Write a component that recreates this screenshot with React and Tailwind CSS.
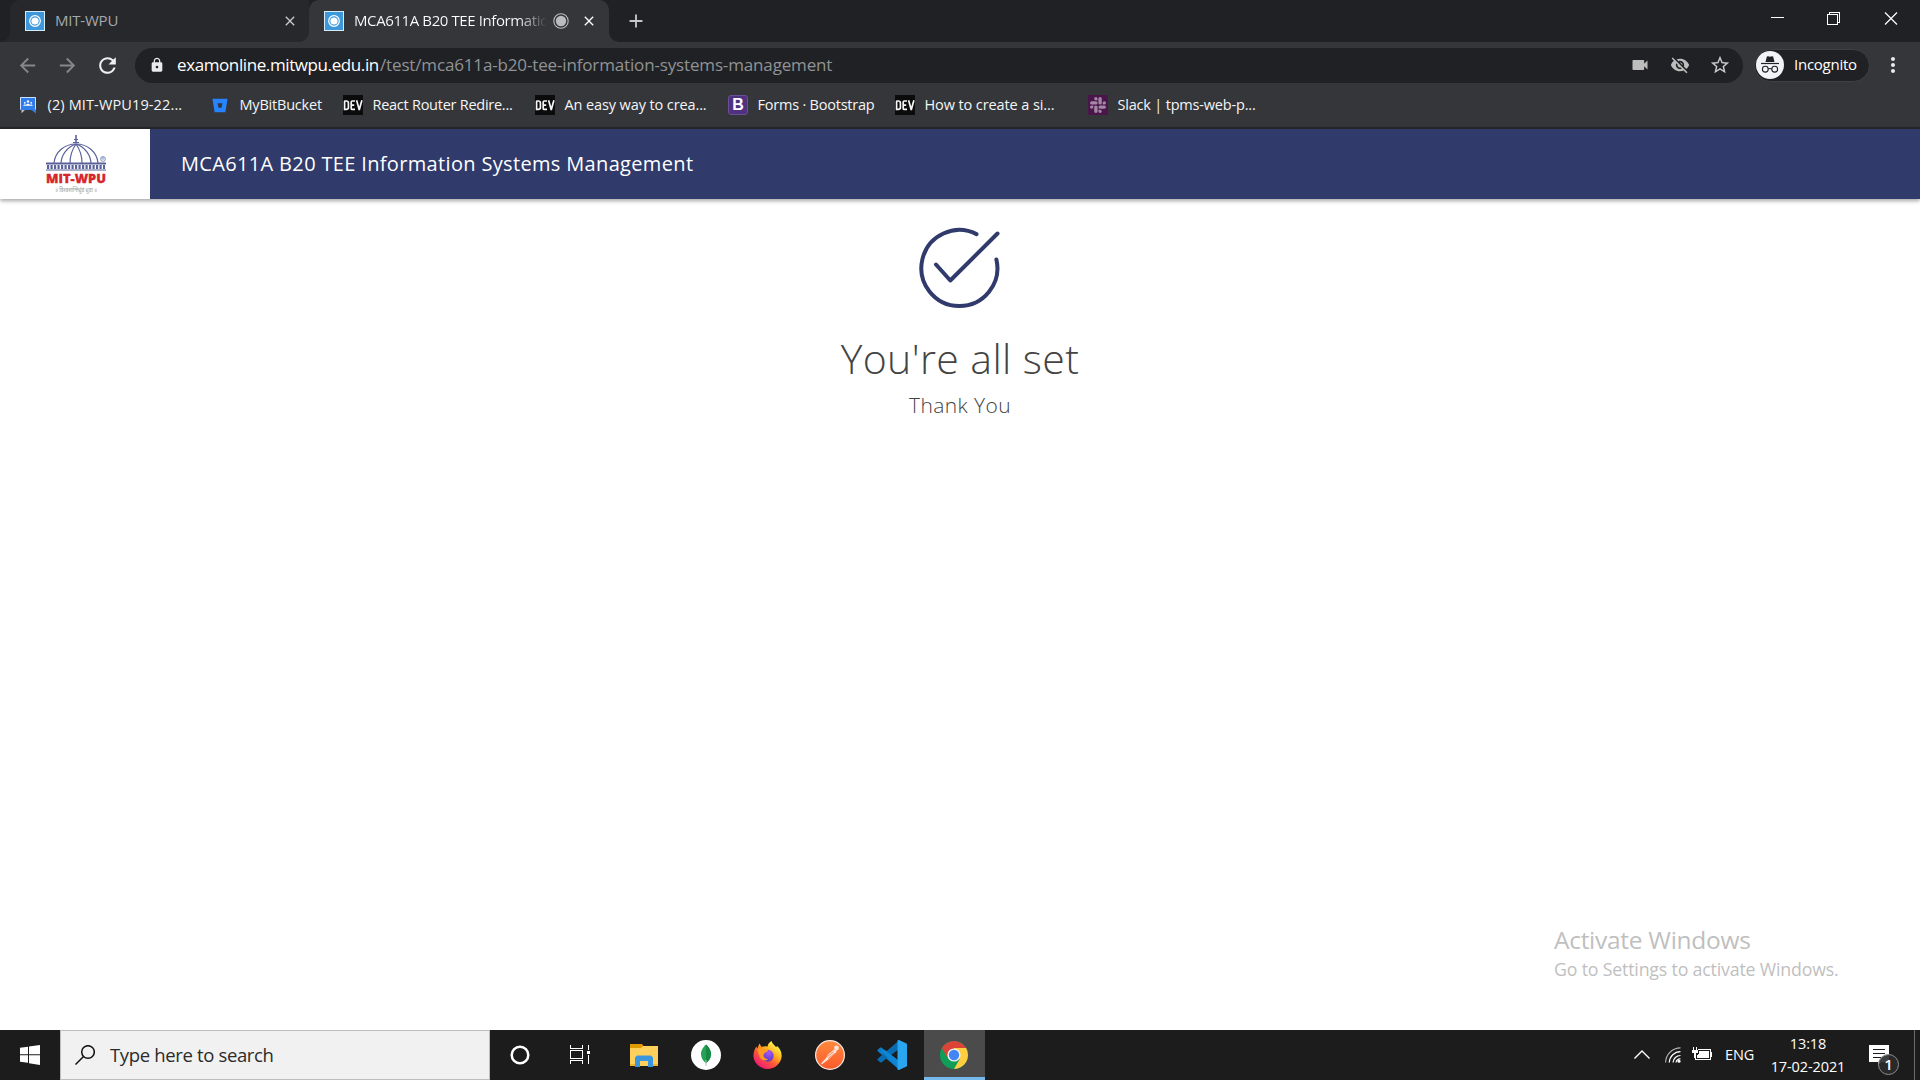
import React from "react";
import {
  MdVideocam,
  MdVisibilityOff,
  MdStarBorder,
  MdLock,
  MdRefresh,
  MdArrowBack,
  MdArrowForward,
  MdClose,
  MdAdd,
  MdMoreVert,
} from "react-icons/md";
import { SiSlack, SiBitbucket } from "react-icons/si";

const UI_FONT = "font-['Open_Sans',sans-serif]";

function Favicon() {
  return (
    <svg className="h-5 w-5 shrink-0" viewBox="0 0 20 20">
      <rect x="0.5" y="0.5" width="19" height="19" fill="#3c97db" stroke="#d7ebf9" />
      <circle cx="10" cy="10" r="5.3" fill="none" stroke="#fff" strokeWidth="1.2" />
      <circle cx="10" cy="10" r="3.6" fill="#fff" />
    </svg>
  );
}

function DevIcon() {
  return (
    <span className="flex h-5 w-5 items-center justify-center bg-[#0b0b0b]">
      <svg className="h-5 w-5" viewBox="0 0 20 20" fill="none" stroke="#f5f5f5" strokeWidth="1.7">
        <path d="M1.6 6v8.4h1.6c1.5 0 2.2-.8 2.2-2V8c0-1.3-.7-2-2.2-2H1.2M12 6H9.2c-.7 0-1 .4-1 1v6.400c0 .7.3 1 1 1H12M8.200 10.200h3M13.600 5.300l2.500 9h.3l2.500-9" />
      </svg>
    </span>
  );
}

function ChatIcon() {
  return (
    <svg className="h-5 w-5" viewBox="0 0 20 20">
      <path d="M3.500 12v6.300L8 14z" fill="#c9c3b8" />
      <path d="M2 2h16v16.500L13.500 15H2z" fill="#2f7ceb" />
      <path d="M2.500 14.500v-12h15v12" fill="none" stroke="#cfe0fb" strokeWidth="1" />
      <g fill="#fff">
        <circle cx="10" cy="6.500" r="1.200" />
        <circle cx="6.800" cy="7.800" r="0.900" />
        <circle cx="13.200" cy="7.800" r="0.900" />
        <path d="M5.200 10.800c.5-1.300 2-1.500 2.700-.9 1-1.600 3.200-1.600 4.200 0 .8-.6 2.200-.4 2.700.9z" />
      </g>
    </svg>
  );
}

function BootstrapIcon() {
  return (
    <span className="flex h-5 w-5 items-center justify-center rounded-[3px] border border-[#6a4f94] bg-[#4f3180] font-['Liberation_Sans',sans-serif] text-[16px] leading-none font-bold text-white">
      B
    </span>
  );
}

function SlackIcon() {
  return (
    <span className="flex h-5 w-5 items-center justify-center bg-[#4a154b]">
      <SiSlack className="h-4 w-4 text-[#a487a5]" />
    </span>
  );
}

const bookmarks = [
  { label: "(2) MIT-WPU19-22...", icon: <ChatIcon />, width: "w-[192px]", track: "tracking-[0.13px]" },
  { label: "MyBitBucket", icon: <SiBitbucket className="h-[15px] w-5 text-[#2684ff]" />, width: "w-[133px]", track: "tracking-[-0.2px]" },
  { label: "React Router Redire...", icon: <DevIcon />, width: "w-[192px]", track: "tracking-[-0.26px]" },
  { label: "An easy way to crea...", icon: <DevIcon />, width: "w-[193px]", track: "tracking-[-0.11px]" },
  { label: "Forms · Bootstrap", icon: <BootstrapIcon />, width: "w-[167px]", track: "tracking-[-0.22px]" },
  { label: "How to create a si...", icon: <DevIcon />, width: "w-[193px]", track: "tracking-[-0.1px]" },
  { label: "Slack | tpms-web-p...", icon: <SlackIcon />, width: "w-[192px]", track: "tracking-[-0.19px]" },
];

function TabStrip() {
  return (
    <div className="flex h-[42px] bg-[#202124]">
      <div className="relative ml-[10px] flex h-full w-[299px] items-center rounded-tl-[10px] bg-[#27282b] pl-[15px]">
        <svg className="absolute bottom-0 -left-[10px] h-[10px] w-[10px]" viewBox="0 0 10 10">
          <path d="M10 0v10H0A10 10 0 0 0 10 0z" fill="#27282b" />
        </svg>
        <Favicon />
        <span className="ml-[10px] flex-1 pb-[2px] text-[15px] tracking-[-0.2px] text-[#a5a8ad]">MIT-WPU</span>
        <MdClose className="mr-[11px] h-4 w-4 text-[#c8cacd]" />
      </div>
      <div className="relative flex h-full w-[300px] items-center rounded-t-[10px] bg-[#35363a] pl-[15px]">
        <svg className="absolute bottom-0 -left-[10px] h-[10px] w-[10px]" viewBox="0 0 10 10">
          <path d="M10 0v10H0A10 10 0 0 0 10 0z" fill="#35363a" />
        </svg>
        <svg className="absolute -right-[10px] bottom-0 h-[10px] w-[10px]" viewBox="0 0 10 10">
          <path d="M0 0v10h10A10 10 0 0 1 0 0z" fill="#35363a" />
        </svg>
        <Favicon />
        <span className="ml-[10px] w-[193px] overflow-hidden bg-linear-to-r from-white from-85% to-transparent bg-clip-text pb-[2px] text-[15px] tracking-[-0.4px] whitespace-nowrap text-transparent">
          MCA611A B20 TEE Informatic
        </span>
        <svg className="ml-[6px] h-4 w-4 shrink-0" viewBox="0 0 16 16">
          <circle cx="8" cy="8" r="7.200" fill="none" stroke="#b9bcc0" strokeWidth="1.100" />
          <circle cx="8" cy="8" r="5.200" fill="#b9bcc0" />
        </svg>
        <MdClose className="ml-[12px] h-4 w-4 shrink-0 text-white" />
      </div>
      <MdAdd className="mt-[10px] ml-[16px] h-[22px] w-[22px] text-[#c6c8cb]" />
      <svg className="ml-auto h-9 w-[180px]" viewBox="0 0 180 36" fill="none" stroke="#fff" shapeRendering="crispEdges">
        <path d="M31 17.500h13" />
        <path d="M87.500 14.500h10v10h-10zM89.500 14v-1.500h10v10H98" />
        <path d="M145 12.500l12 12M157 12.500l-12 12" strokeWidth="1.200" shapeRendering="auto" />
      </svg>
    </div>
  );
}

function Toolbar() {
  return (
    <div className="flex h-[45px] items-center bg-[#35363a] pt-[1px]">
      <MdArrowBack className="ml-[16px] h-[23px] w-[23px] text-[#85878a]" />
      <MdArrowForward className="ml-[17px] h-[23px] w-[23px] text-[#85878a]" />
      <MdRefresh className="ml-[16px] h-[25px] w-[25px] text-[#eeeff0]" />
      <div className="ml-[15px] flex h-[35px] w-[1608px] items-center rounded-full bg-[#202124] pl-[14px]">
        <MdLock className="h-4 w-4 text-[#e8eaed]" />
        <span className="ml-[12px] w-[203px] text-[17px] tracking-[-0.4px] whitespace-nowrap text-white">
          examonline.mitwpu.edu.in
        </span>
        <span className="flex-1 text-[17px] tracking-[-0.15px] whitespace-nowrap text-[#909396]">
          /test/mca611a-b20-tee-information-systems-management
        </span>
        <MdVideocam className="h-[20px] w-[20px] text-[#bdbdbd]" />
        <MdVisibilityOff className="ml-[20px] h-[20px] w-[20px] text-[#bdbdbd]" />
        <MdStarBorder className="mr-[12px] ml-[19px] h-[22px] w-[22px] text-[#c9c9c9]" />
      </div>
      <div className="ml-[11px] flex h-[33px] w-[116px] items-center rounded-full border border-[#3e4044] bg-[#202124] pl-[1px]">
        <svg className="h-7 w-7 shrink-0" viewBox="0 0 28 28">
          <circle cx="14" cy="14" r="14" fill="#f1f3f4" />
          <path d="M9.500 11l1.300-5.200c.2-.6.7-.8 1.200-.6l2 .6 2-.6c.5-.2 1 0 1.200.6L18.500 11z" fill="#202124" />
          <path d="M5 12.500h18" stroke="#202124" strokeWidth="1.200" />
          <g fill="none" stroke="#202124" strokeWidth="1.100">
            <circle cx="9.300" cy="18.200" r="2.900" />
            <circle cx="18.700" cy="18.200" r="2.900" />
            <path d="M12.200 18q1.800-1.100 3.600 0" />
          </g>
        </svg>
        <span className="ml-[10px] pb-[1px] text-[15px] tracking-[-0.25px] text-white">Incognito</span>
      </div>
      <MdMoreVert className="ml-[11px] h-[24px] w-[24px] text-[#e8eaed]" />
    </div>
  );
}

function BookmarksBar() {
  return (
    <div className="flex h-[42px] items-center border-b-2 border-[#26272a] bg-[#35363a] pl-[18px]">
      {bookmarks.map((b) => (
        <div key={b.label} className={`flex shrink-0 items-center gap-[9.5px] pb-[4px] ${b.width}`}>
          <span className="flex h-5 w-5 items-center justify-center">{b.icon}</span>
          <span className={`text-[14.5px] whitespace-nowrap text-[#f4f5f6] ${b.track}`}>{b.label}</span>
        </div>
      ))}
    </div>
  );
}

function UniversityLogo() {
  return (
    <svg className="h-[62px] w-[64px]" viewBox="0 0 64 62">
      <g fill="none" stroke="#5a6399" strokeWidth="1.200">
        <path d="M9 30C10 19.500 19 11 31 11s21 8.500 22 19" />
        <path d="M16 30c.5-8 6-16 15-19M46 30c-.5-8-6-16-15-19M25 30c0-8 2.500-14 6-19M37 30c0-8-2.500-14-6-19" />
        <path d="M31 2v8" strokeWidth="1.600" />
        <path d="M28 9.500h6M29 6.500h4" />
        <path d="M1 30.500h60" strokeWidth="2" />
        <path d="M2 34h58" strokeWidth="4" strokeDasharray="2.200 1.300" />
        <path d="M1 37h60" strokeWidth="1.200" />
        <circle cx="58" cy="26" r="2.400" strokeWidth="0.700" />
      </g>
      <text x="58" y="27.400" textAnchor="middle" fontSize="4" fill="#5a6399" fontFamily="Liberation Sans, sans-serif">R</text>
      <text x="1" y="50.200" textLength="60" lengthAdjust="spacingAndGlyphs" fontSize="13" fontWeight="800" fill="#d6262c" stroke="#d6262c" strokeWidth="0.300" fontFamily="Open Sans, sans-serif">
        MIT-WPU
      </text>
      <text x="31" y="59" textAnchor="middle" textLength="42" lengthAdjust="spacingAndGlyphs" fontSize="5.500" fill="#9a9a9a" fontFamily="Noto Sans, sans-serif">
        ॥ विश्वशान्तिर्ध्रुवं ध्रुवा ॥
      </text>
    </svg>
  );
}

function PageHeader() {
  return (
    <header className="flex h-[70px] items-center bg-[#303a6b] shadow-[0_2px_4px_rgba(0,0,0,0.35)]">
      <div className="flex h-full w-[150px] items-center bg-white pl-[45px]">
        <UniversityLogo />
      </div>
      <h1 className="ml-[31px] text-[20px] leading-[30px] tracking-[0.34px] text-white">
        MCA611A B20 TEE Information Systems Management
      </h1>
    </header>
  );
}

function Confirmation() {
  return (
    <main className="flex flex-1 flex-col items-center pt-[28px]">
      <svg className="h-[82px] w-[82px]" viewBox="0 0 82 82" fill="none" stroke="#303a6b" strokeWidth="4" strokeLinecap="round" strokeLinejoin="round">
        <path d="M57.500 7.100A38 38 0 1 0 77.400 32.500" />
        <path d="M17 37.500L31.300 53.500L78.500 6.500" />
      </svg>
      <h2 className="mt-[19px] text-[41px] leading-[60px] font-light tracking-[0.4px] text-[#444]">You're all set</h2>
      <p className="mt-[2px] text-[21px] leading-[30px] font-light tracking-[0.4px] text-[#444]">Thank You</p>
    </main>
  );
}

function CortanaIcon() {
  return (
    <svg className="h-5 w-5" viewBox="0 0 20 20">
      <circle cx="10" cy="10" r="8.300" fill="none" stroke="#fff" strokeWidth="2.500" />
    </svg>
  );
}

function TaskViewIcon() {
  return (
    <svg className="h-5 w-5" viewBox="0 0 20 20" fill="none" stroke="#fff" shapeRendering="crispEdges">
      <path d="M.5 0v3.500h12V0M.5 19v-3.500h12V19M.5 5.500h12v8h-12zM18.500 0v5M18.500 10v9" />
      <path d="M17 6h3v3h-3z" fill="#fff" stroke="none" />
    </svg>
  );
}

function ExplorerIcon() {
  return (
    <svg className="h-6 w-7" viewBox="0 0 28 24">
      <path d="M0 1h12l1.500 2-1.500 3H0z" fill="#e09b00" />
      <path d="M0 5h11l2-2h15v20H0z" fill="#ffd05c" />
      <path d="M5 24V14.500l2-2h14l2 2V24h-5v-6h-8v6z" fill="#3a96dd" />
      <path d="M0 21h5v2H0zM23 21h5v2h-5z" fill="#f2b52e" />
    </svg>
  );
}

function MongoIcon() {
  return (
    <svg className="h-[30px] w-[30px]" viewBox="0 0 30 30">
      <circle cx="15" cy="15" r="15" fill="#fff" />
      <path d="M15 4.500c4 3.700 5 7 5 9.800 0 4-2.500 7-5 9-2.500-2-5-5-5-9 0-2.800 1-6.100 5-9.800z" fill="#23a455" />
      <path d="M15 4.500c4 3.700 5 7 5 9.800 0 4-2.500 7-5 9z" fill="#168a43" />
      <path d="M15 20v6" stroke="#b8c4c2" strokeWidth="1" />
    </svg>
  );
}

function FirefoxIcon() {
  return (
    <svg className="h-[29px] w-[29px]" viewBox="0 0 29 29">
      <defs>
        <linearGradient id="fx" x1="0.850" y1="0.100" x2="0.200" y2="0.950">
          <stop offset="0.050" stopColor="#fff44f" />
          <stop offset="0.350" stopColor="#ffb01f" />
          <stop offset="0.600" stopColor="#ff5a36" />
          <stop offset="1" stopColor="#ee1579" />
        </linearGradient>
        <radialGradient id="fxglobe" cx="0.600" cy="0.250" r="0.800">
          <stop offset="0" stopColor="#a855f7" />
          <stop offset="1" stopColor="#4e3bbd" />
        </radialGradient>
      </defs>
      <path d="M18.500 0c.5 2.500 3 4 4.700 6.200l.8-1.200C26.500 7 28.700 10.500 28.700 15A14.200 14.200 0 0 1 .4 15c0-4 1.300-7 2.900-9.500l1 2L6.500 2.500 8.500 6c3-1 4.600-.9 6-.3C14.800 3 16.500 1 18.500 0z" fill="url(#fx)" />
      <circle cx="14.700" cy="14.800" r="6" fill="url(#fxglobe)" />
      <path d="M4 8.500c2-1.800 5-2 7.500-.9 1 .9 2 1.600 3.700 1.700-.4 1.900-3.700 2-4.200 3.700-1.500 2 .5 5 4 5.300-3 2.700-7.500.5-8.500-3C5.700 13 5 11 4 8.500z" fill="#ff9a22" />
    </svg>
  );
}

function PostmanIcon() {
  return (
    <svg className="h-[30px] w-[30px]" viewBox="0 0 30 30">
      <defs>
        <linearGradient id="pm" x1="0" y1="0" x2="0" y2="1">
          <stop offset="0" stopColor="#ff8a3d" />
          <stop offset="1" stopColor="#fb5a2c" />
        </linearGradient>
      </defs>
      <circle cx="15" cy="15" r="14.400" fill="url(#pm)" stroke="#f4e9e4" strokeWidth="1.200" />
      <circle cx="21.500" cy="8" r="2.400" fill="#fde3d8" />
      <path d="M19 9.500L13 14.500l-1.500 3L6 23.500l1 .7 6.500-4.700L20.500 13l1.500-2.500z" fill="#fde3d8" />
      <path d="M12.500 16.500l6-4.700M13 18.700l6.500-5.200" stroke="#fb6c38" strokeWidth="0.800" />
    </svg>
  );
}

function VsCodeIcon() {
  return (
    <svg className="h-[30px] w-[30px]" viewBox="0 0 30 30">
      <path d="M1 9.500l2-1.800c.6-.4 1.200-.4 1.700 0L22 21v8.500L1 11.500c-.7-.6-.7-1.400 0-2z" fill="#0d7cc8" />
      <path d="M1 20.500l2 1.800c.6.4 1.200.4 1.700 0L22 9V.5L1 18.500c-.7.600-.7 1.400 0 2z" fill="#0b6bb0" />
      <path d="M4 11l18 18.500V21L8 10z" fill="#0e86d4" />
      <path d="M22 0l7 3.200c.6.300 1 .8 1 1.500v20.600c0 .7-.4 1.200-1 1.500L22 30c-.9.200-1.500-.2-1.500-1V1c0-.8.600-1.200 1.500-1z" fill="#2aa5ef" />
    </svg>
  );
}

function ChromeIcon() {
  return (
    <svg className="h-7 w-7" viewBox="0 0 28 28">
      <circle cx="14" cy="14" r="14" fill="#0f9d58" />
      <path d="M14 14l6.060 3.500L14 28a14 14 0 0 0 12.120-21H14z" fill="#ffcd40" />
      <path d="M1.880 7L7.940 17.500 14 7h12.120A14 14 0 0 0 1.880 7z" fill="#db4437" />
      <circle cx="14" cy="14" r="6.600" fill="#f1f1f1" />
      <circle cx="14" cy="14" r="5.200" fill="#4285f4" />
    </svg>
  );
}

function Taskbar() {
  return (
    <footer className="flex h-[50px] items-center bg-[#1c1c1c] text-white">
      <div className="flex w-[60px] justify-center">
        <svg className="h-5 w-5" viewBox="0 0 20 20" fill="#fff">
          <path d="M0 2.800L8 1.700v7.500H0zM9 1.500L20 0v9.200H9zM0 10.200h8v7.600l-8-1.100zM9 10.200h11V20L9 18.300z" />
        </svg>
      </div>
      <div className="flex h-full w-[430px] items-center border border-[#bdbdbd] bg-[#f1f1f1] pl-[14px]">
        <svg className="h-5 w-5" viewBox="0 0 20 20" fill="none" stroke="#111" strokeWidth="1.500">
          <circle cx="13" cy="7" r="6.300" />
          <path d="M8.500 11.500L.5 19.500" />
        </svg>
        <span className="ml-[15px] text-[18.5px] tracking-[-0.35px] text-[#2b2b2b]">Type here to search</span>
      </div>
      <div className="flex w-[60px] justify-center"><CortanaIcon /></div>
      <div className="flex w-[60px] justify-center"><TaskViewIcon /></div>
      <div className="flex w-[67px] justify-center"><ExplorerIcon /></div>
      <div className="flex w-[58px] justify-center"><MongoIcon /></div>
      <div className="flex w-[65px] justify-center"><FirefoxIcon /></div>
      <div className="flex w-[60px] justify-center"><PostmanIcon /></div>
      <div className="flex w-[64px] justify-center"><VsCodeIcon /></div>
      <div className="flex h-full w-[61px] items-center border-b-[3px] border-[#76b9ed] bg-[#4b4b4b] pt-[3px] pl-[16px]">
        <ChromeIcon />
      </div>
      <div className="ml-auto flex h-full items-center">
        <svg className="h-5 w-4" viewBox="0 0 16 20" fill="none" stroke="#fff" strokeWidth="1.400">
          <path d="M.5 13.500L8 6l7.500 7.500" />
        </svg>
        <svg className="ml-[15px] h-4 w-4" viewBox="0 0 16 16" fill="none" stroke="#fff" strokeWidth="1.200">
          <path d="M.6 15.500A15 15 0 0 1 15.500.8" stroke="#b5b5b5" />
          <path d="M4.300 15.500A11.300 11.300 0 0 1 15.500 4.600M8 15.500a7.500 7.500 0 0 1 7.500-7" />
          <path d="M11 15.500a4 4 0 0 1 4.500-3.500" />
          <circle cx="14" cy="14.200" r="1.500" fill="#fff" stroke="none" />
        </svg>
        <svg className="ml-[11px] h-4 w-5" viewBox="0 0 20 16" fill="none" stroke="#fff" shapeRendering="crispEdges">
          <path d="M6 2.500h12.500v10H3.500V9M1.500 0v3M4.500 0v3" />
          <path d="M0 3h6v3H4v5H2V6H0zM7 4h10v7H5V8l2-2zM19 5h1v5h-1z" fill="#fff" stroke="none" />
        </svg>
        <span className="ml-[13px] w-[30px] text-[14.5px] tracking-[-0.1px]">ENG</span>
        <div className="ml-[15px] flex w-[76px] flex-col items-center text-[14.5px] leading-[23px] tracking-[-0.1px]">
          <span>13:18</span>
          <span>17-02-2021</span>
        </div>
        <div className="relative ml-[23px] h-5 w-5">
          <svg className="h-5 w-5" viewBox="0 0 20 20">
            <path d="M0 0h20v17h-8l-3 3v-3H0z" fill="#fff" />
            <path d="M4 4.500h12M4 8.500h12M4 12.500h8" stroke="#1c1c1c" shapeRendering="crispEdges" />
          </svg>
          <span className="absolute top-[9px] left-[9px] flex h-[21px] w-[21px] items-center justify-center rounded-full border border-[#8f8f8f] bg-[#2b2b2b]/90 text-[15px] leading-none font-semibold">
            1
          </span>
        </div>
        <div className="ml-[25px] h-full w-[6px] border-l border-[#6b6b6b]" />
      </div>
    </footer>
  );
}

function ActivationNotice() {
  return (
    <div className="absolute top-[923px] left-[1554px] whitespace-nowrap text-[#bfbfbf]">
      <p className="text-[24.5px] leading-[33px] tracking-[-0.28px]">Activate Windows</p>
      <p className="text-[17.75px] leading-[26px] tracking-[-0.18px]">Go to Settings to activate Windows.</p>
    </div>
  );
}

export default function App() {
  return (
    <div className={`relative flex h-[1080px] w-[1920px] flex-col overflow-hidden bg-white ${UI_FONT}`}>
      <TabStrip />
      <Toolbar />
      <BookmarksBar />
      <PageHeader />
      <Confirmation />
      <Taskbar />
      <ActivationNotice />
    </div>
  );
}
